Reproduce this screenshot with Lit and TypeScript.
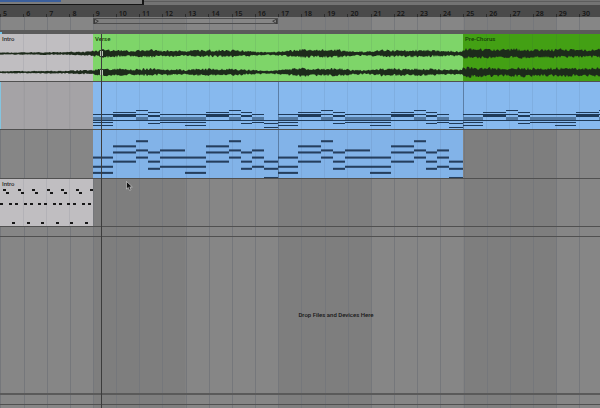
import { LitElement, html, svg, css } from "lit";
import { customElement } from "lit/decorators.js";

// Width of one bar, and where each bar starts, in drawing units.
const BAR = 23.16;
const barX = (n: number) => 93 + (n - 9) * BAR;

// Chord pattern of an eight-bar clip: [start, end, rows]
type Chord = [number, number, number[]];
const UPPER: Chord[] = [
  [0, 20, [32, 35, 36, 38, 40, 43]],
  [20, 43, [30, 32, 33, 38]],
  [43, 55, [28, 32, 35, 36, 38]],
  [55, 67, [30, 33, 38, 41]],
  [67, 92, [32, 35, 36, 38, 40]],
  [92, 113, [32, 35, 36, 38, 40, 43]],
  [113, 136, [30, 32, 33, 38]],
  [136, 148, [28, 32, 35, 36, 38]],
  [148, 159, [30, 33, 38, 41]],
  [159, 171, [32, 35, 36, 38, 40]],
  [171, 185, [38, 41, 45]],
];
const LOWER: Chord[] = [
  [0, 20, [26, 35, 41]],
  [20, 43, [15, 21, 30]],
  [43, 55, [10, 19, 26]],
  [55, 67, [21, 30, 37]],
  [67, 92, [19, 26, 35]],
  [92, 113, [26, 35, 41]],
  [113, 136, [15, 21, 30]],
  [136, 148, [10, 19, 26]],
  [148, 159, [21, 30, 37]],
  [159, 171, [19, 26, 35]],
  [171, 185, [30, 37, 46]],
];

// Loudness along the audio track: [x, half height of the wave]
const LEVEL: [number, number][] = [
  [0, 1], [60, 1.2], [78, 1.7], [92, 2.1], [104, 3.6], [116, 3.3], [130, 2.5],
  [150, 3.5], [160, 2.6], [175, 2.8], [185, 2], [196, 3.2], [215, 3], [235, 3], [250, 2.2],
  [268, 1.3], [280, 2], [300, 3.6], [320, 3.2], [338, 3.5], [350, 2.4], [365, 1.7],
  [380, 3.2], [400, 3], [425, 3.2], [445, 2.4], [462, 2.2], [463, 4.4], [480, 4.2],
  [500, 3.5], [520, 4.2], [540, 3.6], [560, 4], [580, 3.4], [600, 3.9],
];
function levelAt(x: number) {
  for (let i = 1; i < LEVEL.length; i++) {
    const [x0, a] = LEVEL[i - 1];
    const [x1, b] = LEVEL[i];
    if (x <= x1) return a + ((b - a) * (x - x0)) / (x1 - x0);
  }
  return 3;
}
function wave(from: number, to: number, mid: number, seed: number) {
  let top = "";
  let bottom = "";
  for (let x = from; x <= to; x++) {
    const r = Math.abs(Math.sin(x * 12.9898 + seed) * 43758.5453) % 1;
    const q = Math.abs(Math.sin(x * 78.233 + seed) * 12543.123) % 1;
    const h = levelAt(x);
    top += `L${x - from} ${(mid - h * (0.55 + 0.75 * r)).toFixed(2)}`;
    bottom = `L${x - from} ${(mid + h * (0.55 + 0.75 * q)).toFixed(2)}` + bottom;
  }
  return "M" + top.slice(1) + bottom + "Z";
}

@customElement("app-root")
export class AppRoot extends LitElement {
  static styles = css`
    :host {
      display: block;
      font-family: Roboto, "Open Sans", sans-serif;
      font-size: 6px;
      font-weight: 500;
      line-height: 10px;
      color: #161616;
    }
    .app {
      position: relative;
      display: flex;
      flex-direction: column;
      min-height: 100vh;
      overflow: hidden;
      background: #868686;
    }
    svg { display: block; width: 100%; height: 100%; }
    .overview { display: flex; height: 5px; background: #737373; }
    .window {
      width: 24%;
      box-sizing: border-box;
      border-right: 2px solid #151515;
      border-bottom: 1px solid #151515;
      background: #7c7c7c;
    }
    .song { width: 43%; height: 2px; background: #3b5f9c; }
    .rest { flex: 1; margin-top: 1px; border-top: 1px solid #5c5c5c; }
    .ruler, .loops, .lane { display: grid; grid-template-columns: 93fr 185fr 185fr 137fr; }
    .ruler { height: 12px; background: #4a4a4a; }
    .bars {
      grid-column: 1 / -1;
      display: grid;
      grid-template-columns: repeat(25, 2316fr) 2100fr;
      overflow: hidden;
    }
    .bar {
      min-width: 0;
      padding: 4px 0 0 3px;
      font-family: "Open Sans", sans-serif;
      font-size: 7px;
      line-height: 9px;
      font-weight: 600;
      color: #141414;
      background: linear-gradient(#2c2c2c, #2c2c2c) 0 100% / 1px 4px no-repeat;
    }
    .body { position: relative; flex: 1; display: flex; flex-direction: column; }
    .guides { position: absolute; inset: 0; }
    .loops, .gap, .lane, .slim, .drop, .foot { position: relative; }
    .loops { height: 13px; }
    .brace {
      grid-column: 2;
      height: 6px;
      margin-top: 1px;
      box-sizing: border-box;
      border: 1px solid #4e4e4e;
      display: flex;
      justify-content: space-between;
    }
    .brace svg { width: 5px; height: 5px; }
    .gap { height: 4px; background: linear-gradient(90deg, #6fc6ee, #6fc6ee) 0 2px / 2px 2px no-repeat #5b5b5b; }
    .lane { height: 48px; box-sizing: border-box; border-bottom: 1px solid #505050; }
    .lane.tall { height: 49px; }
    .clip { position: relative; min-width: 0; overflow: hidden; }
    .name { position: absolute; left: 2px; top: 0; color: #2b2b2b; }
    .clip svg { position: absolute; inset: 0; }
    .pale { background: #c0bec1; }
    .empty { background: #a5a3a6; border-left: 1px solid #84c5e0; }
    .lime { background: #7ed569; }
    .green { background: #43a014; }
    .lime .name, .green .name { color: #143c08; }
    .sky { background: #87b9ee; }
    .blue { background: #82b3e8; }
    .edge { box-shadow: inset 1px 0 #5b7ea6; }
    .two { grid-column: 2 / 4; }
    .slim { height: 9px; border-bottom: 1px solid #505050; }
    .drop {
      flex: 1;
      display: flex;
      align-items: center;
      justify-content: center;
      border-bottom: 2px solid #5a5a5a;
      padding-left: 72px;
    }
    .foot { height: 9px; border-bottom: 1px solid #505050; margin-bottom: 3px; }
    .playhead { position: absolute; left: 16.8%; top: 34px; bottom: 0; width: 1px; background: #3c3c3c; }
    .mark {
      position: absolute;
      left: 16.6%;
      width: 3px;
      height: 5px;
      box-sizing: border-box;
      border: solid #b9c7b4;
      border-width: 0 1px;
    }
    .left { top: 51px; }
    .right { top: 70px; }
    .pointer { position: absolute; left: 21%; top: 181px; width: 7px; height: 10px; }
  `;

  private guides() {
    const bars = Array.from({ length: 26 }, (_, i) => i + 5);
    return svg`<svg class="guides" viewBox="0 0 600 100" preserveAspectRatio="none" aria-hidden="true">
      ${[9, 17, 25].map((n) => svg`<rect x=${barX(n)} y="0" width=${BAR * 4} height="100" fill="#7e7e7e"/>`)}
      ${bars.map((n) => svg`<rect x=${Math.round(barX(n))} y="0" width="1" height="100" fill="#75777b"/>`)}
    </svg>`;
  }

  private barLines(count: number) {
    return Array.from({ length: count }, (_, i) =>
      svg`<rect x=${Math.round((i + 1) * BAR)} y="0" width="1" height="47" fill="#345" fill-opacity=".09"/>`);
  }

  private audio(from: number, to: number) {
    return html`<svg viewBox="0 0 ${to - from} 47" preserveAspectRatio="none" aria-hidden="true">
      ${this.barLines(Math.floor((to - from) / BAR))}
      <path d=${wave(from, to, 19.5, 1)} fill="#1d2b1b"/>
      <path d=${wave(from, to, 38.2, 2)} fill="#1d2b1b"/>
    </svg>`;
  }

  private notes(chords: Chord[], width: number, strong: boolean) {
    return html`<svg viewBox="0 0 ${width} 47" preserveAspectRatio="none" aria-hidden="true">
      ${this.barLines(7)}
      ${chords.map(([a, b, rows]) =>
        rows.map((y) => svg`<rect x=${a} y=${y} width=${b - a} height=${strong || y === 36 || y === 33 ? 2 : 1}
          fill=${strong ? "#1d3450" : y === 35 || y === 36 ? "#53789f" : "#1f3a58"}
          fill-opacity=${strong ? 0.92 : 1}/>`))}
    </svg>`;
  }

  private drums() {
    const hits: [number, number][] = [];
    for (let i = 0; i < 6; i++) {
      const x = Math.round(i * 14.5);
      hits.push([x + 3, 10], [x + 6, 13], [x + 9, 24], [x + 15, 24], [x + 12, 43]);
    }
    hits.push([0, 24], [90, 10]);
    return html`<svg viewBox="0 0 93 47" preserveAspectRatio="none" aria-hidden="true">
      ${this.barLines(3)}
      ${hits.map(([x, y]) => svg`<rect x=${x} y=${y} width="3" height="2" fill="#161616"/>`)}
    </svg>`;
  }

  render() {
    return html`<main class="app">
      <div class="overview"><div class="window"><div class="song"></div></div><div class="rest"></div></div>
      <div class="ruler"><div class="bars">
        ${Array.from({ length: 26 }, (_, i) => html`<span class="bar">${i + 5}</span>`)}
      </div></div>
      <section class="body">
        ${this.guides()}
        <div class="loops"><div class="brace">
          <svg viewBox="0 0 5 5"><path d="M.5 .2L4.3 2.2L.5 4.5Z" fill="#858585" stroke="#292929" stroke-width=".8"/></svg>
          <svg viewBox="0 0 5 5"><path d="M4.5 .2L.7 2.2L4.5 4.5Z" fill="#858585" stroke="#292929" stroke-width=".8"/></svg>
        </div></div>
        <div class="gap"></div>
        <div class="lane">
          <div class="clip pale">${this.audio(0, 93)}<span class="name">Intro</span></div>
          <div class="clip lime two">${this.audio(93, 463)}<span class="name">Verse</span></div>
          <div class="clip green">${this.audio(463, 600)}<span class="name">Pre-Chorus</span></div>
        </div>
        <div class="lane">
          <div class="clip empty"><svg viewBox="0 0 93 47" preserveAspectRatio="none" aria-hidden="true">${this.barLines(3)}</svg></div>
          <div class="clip sky">${this.notes(UPPER, 185, false)}</div>
          <div class="clip sky edge">${this.notes(UPPER, 185, false)}</div>
          <div class="clip sky edge">${this.notes(UPPER, 137, false)}</div>
        </div>
        <div class="lane tall">
          <div></div>
          <div class="clip blue">${this.notes(LOWER, 185, true)}</div>
          <div class="clip blue edge">${this.notes(LOWER, 185, true)}</div>
        </div>
        <div class="lane"><div class="clip pale">${this.drums()}<span class="name">Intro</span></div></div>
        <div class="slim"></div>
        <div class="drop">Drop Files and Devices Here</div>
        <div class="foot"></div>
      </section>
      <div class="playhead"></div>
      <div class="mark left"></div>
      <div class="mark right"></div>
      <svg class="pointer" viewBox="0 0 7 10" aria-hidden="true">
        <path d="M.5 .5V8L2.3 6.4L3.5 9.3L5 8.7L3.8 5.9H6.3Z" fill="#111" stroke="#ddd" stroke-width=".6"/>
      </svg>
    </main>`;
  }
}
